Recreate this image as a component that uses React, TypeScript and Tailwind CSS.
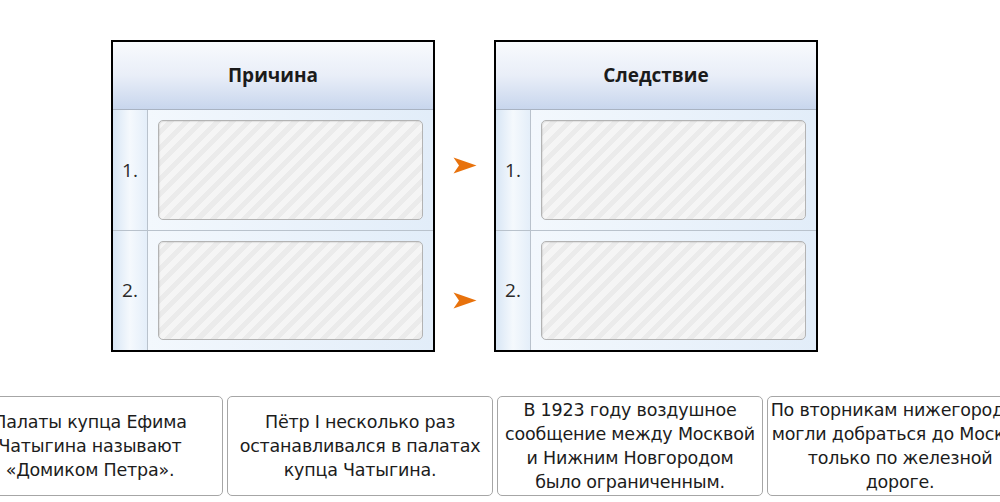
const causes = ["Причина", "Следствие"];

// answer cards, one string per printed line
const cards = [
  ["Палаты купца Ефима", "Чатыгина называют", "«Домиком Петра»."],
  ["Пётр I несколько раз", "останавливался в палатах", "купца Чатыгина."],
  ["В 1923 году воздушное", "сообщение между Москвой", "и Нижним Новгородом", "было ограниченным."],
  ["По вторникам нижегородцы", "могли добраться до Москвы", "только по железной", "дороге."],
];

const Arrow = () => (
  <svg width="24" height="17" viewBox="0 0 24 17">
    <path d="M0.5 0.5 L23.5 8.5 L0.5 16.5 L6 8.5 Z" fill="#e8720c" />
  </svg>
);

const DropRow = ({ n, first }: { n: number; first?: boolean }) => (
  <div className={`flex h-[120px] ${first ? "" : "border-t border-[#b9c2cc]"}`}>
    <div className="w-[35px] shrink-0 border-r border-[#b9c2cc] bg-gradient-to-r from-[#d8e6f5] via-[#f5f9fd] to-[#e4eef9] flex items-center justify-center text-[19px] text-[#2a2a2a] font-['Open_Sans',sans-serif]">
      {n}.
    </div>
    <div className="flex-1 p-[10px] bg-gradient-to-r from-[#f3f8fd] to-[#e2edf9]">
      <div className="h-full rounded-[5px] border border-[#b3b3b3] shadow-[inset_1px_1px_1px_rgba(0,0,0,0.08)] bg-[repeating-linear-gradient(135deg,#f5f5f5_0px,#f5f5f5_6px,#ebebeb_6px,#ebebeb_11px)]" />
    </div>
  </div>
);

const Table = ({ title }: { title: string }) => (
  <div className="w-[324px] border-2 border-black bg-white">
    <div className="h-[68px] border-b border-[#a9b3c2] bg-gradient-to-b from-[#f8fafd] via-[#e9eef8] to-[#c8d6ed] flex items-center justify-center text-[19px] font-bold text-[#1b1b1b] font-['Open_Sans',sans-serif]">
      {title}
    </div>
    <DropRow n={1} first />
    <DropRow n={2} />
  </div>
);

export default function App() {
  return (
    <div className="w-[1000px] h-[502px] overflow-hidden bg-white">
      <div className="flex pt-[40px] pl-[111px]">
        <Table title={causes[0]} />
        <div className="w-[59px] flex flex-col items-center pt-[117px] gap-[118px]">
          <Arrow />
          <Arrow />
        </div>
        <Table title={causes[1]} />
      </div>
      <div className="flex gap-[4px] ml-[-43px] mt-[44px]">
        {cards.map((lines) => (
          <div
            key={lines[0]}
            className="w-[266px] h-[100px] shrink-0 rounded-[5px] border border-[#a6a6a6] bg-white flex flex-col items-center justify-center text-center text-[17.5px] leading-[24px] tracking-[-0.2px] text-[#1c1c1c] font-['DejaVu_Sans',Verdana,sans-serif]"
          >
            {lines.map((l) => (
              <span key={l} className="whitespace-nowrap">
                {l}
              </span>
            ))}
          </div>
        ))}
      </div>
    </div>
  );
}
